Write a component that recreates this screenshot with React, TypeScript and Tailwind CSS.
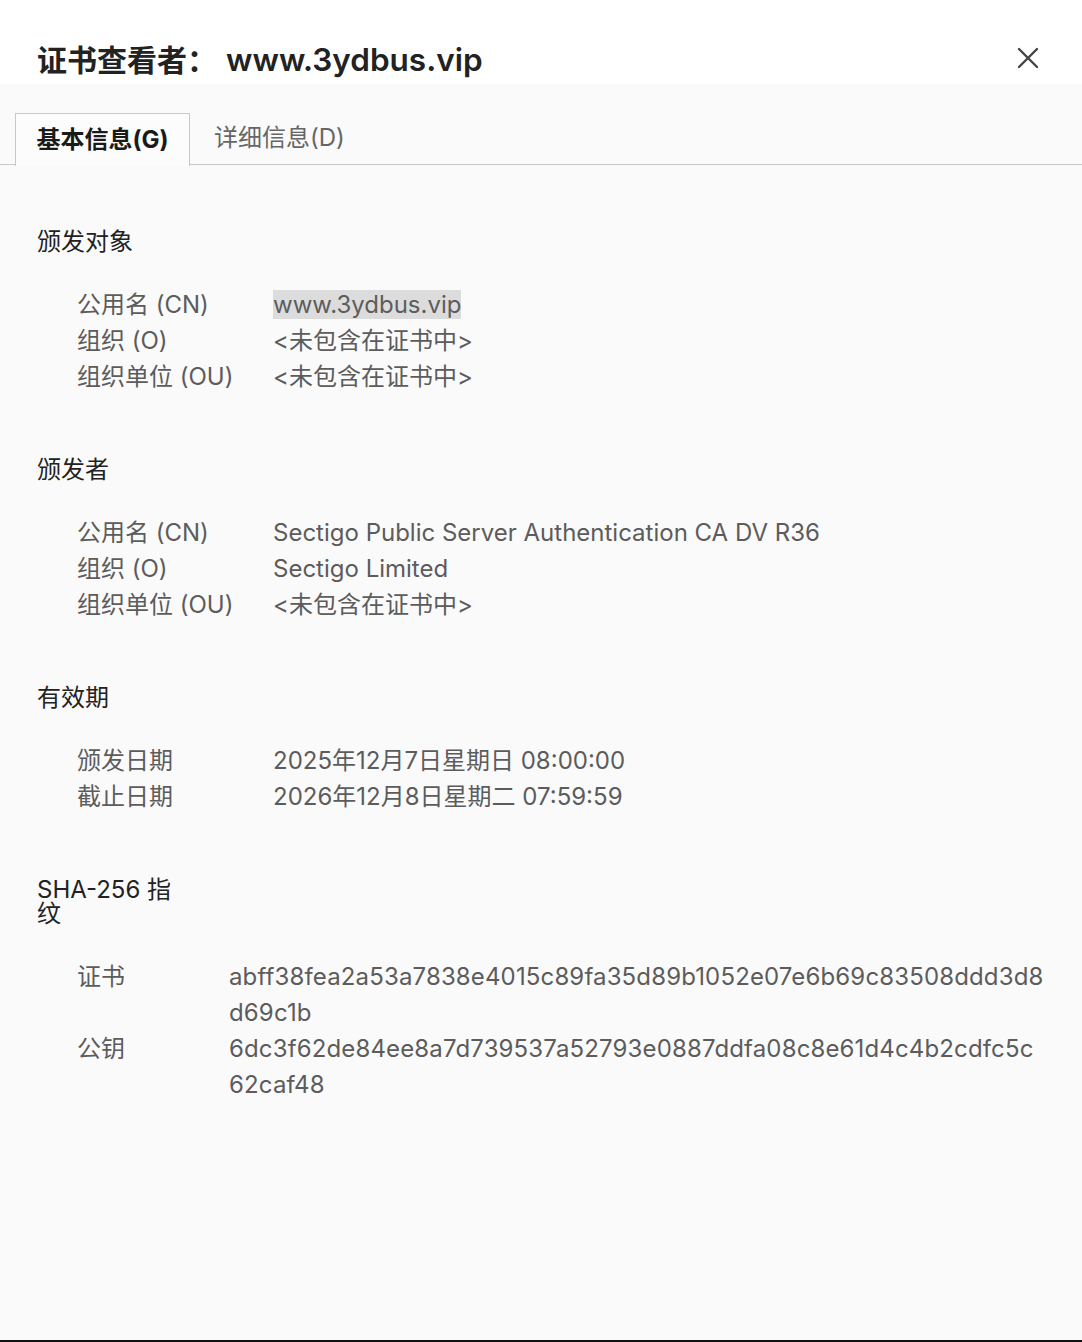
import React from "react";

type Row = { label: string; value: string[]; highlight?: boolean };
type Section = { title: string; labelWidth: string; mono?: boolean; rows: Row[] };

const NOT_INCLUDED = "<未包含在证书中>";

const sections: Section[] = [
  {
    title: "颁发对象",
    labelWidth: "w-[196px]",
    rows: [
      { label: "公用名 (CN)", value: ["www.3ydbus.vip"], highlight: true },
      { label: "组织 (O)", value: [NOT_INCLUDED] },
      { label: "组织单位 (OU)", value: [NOT_INCLUDED] },
    ],
  },
  {
    title: "颁发者",
    labelWidth: "w-[196px]",
    rows: [
      { label: "公用名 (CN)", value: ["Sectigo Public Server Authentication CA DV R36"] },
      { label: "组织 (O)", value: ["Sectigo Limited"] },
      { label: "组织单位 (OU)", value: [NOT_INCLUDED] },
    ],
  },
  {
    title: "有效期",
    labelWidth: "w-[196px]",
    rows: [
      { label: "颁发日期", value: ["2025年12月7日星期日 08:00:00"] },
      { label: "截止日期", value: ["2026年12月8日星期二 07:59:59"] },
    ],
  },
  {
    title: "SHA-256 指纹",
    labelWidth: "w-[152px]",
    mono: true,
    rows: [
      {
        label: "证书",
        value: ["abff38fea2a53a7838e4015c89fa35d89b1052e07e6b69c83508ddd3d8", "d69c1b"],
      },
      {
        label: "公钥",
        value: ["6dc3f62de84ee8a7d739537a52793e0887ddfa08c8e61d4c4b2cdfc5c", "62caf48"],
      },
    ],
  },
];

const CloseIcon = () => (
  <svg width="24" height="24" viewBox="0 0 24 24" fill="none" stroke="#444" strokeWidth="2.4" strokeLinecap="round">
    <path d="M3 3 L21 21 M21 3 L3 21" />
  </svg>
);

export default function App() {
  return (
    <div
      className="flex h-[1342px] w-full flex-col bg-[#fafafa] border-b-2 border-[#111]"
      style={{ fontFamily: 'Inter, "Noto Sans CJK SC", sans-serif' }}
    >
      {/* title bar */}
      <div className="flex h-[84px] items-start justify-between bg-white pl-[37px] pr-[42px] pt-[40px]">
        <h1 className="text-[30px] font-semibold leading-[40px] text-[#222]">
          证书查看者：<span className="ml-[9px] text-[31.5px]">www.3ydbus.vip</span>
        </h1>
        <button className="mt-[6px] text-[#444]">
          <CloseIcon />
        </button>
      </div>

      {/* tabs */}
      <div className="flex items-end border-b-[1.5px] border-[#c8c8c8] pl-[15px] pt-[28px]">
        <div className="-mb-[1.5px] flex h-[53px] w-[175px] items-center justify-center border-[1.5px] border-b-0 border-[#c8c8c8] bg-[#fcfcfc] text-[24px] font-bold text-[#1a1a1a]">
          基本信息(G)
        </div>
        <div className="flex h-[52px] items-center pl-[24px] text-[24px] text-[#666]">详细信息(D)</div>
      </div>

      {/* body */}
      <div className="flex flex-col gap-[63px] pl-[37px] pt-[65px]">
        {sections.map((s) => (
          <div key={s.title} className="flex flex-col gap-[33px]">
            <div className="max-w-[146px] text-[24px] leading-[24px] text-[#222]">{s.title}</div>
            <div className="flex flex-col pl-[40px]">
              {s.rows.map((r) => (
                <div key={r.label} className="flex text-[24px] leading-[36px] text-[#5c5c5c]">
                  <div className={`${s.labelWidth} shrink-0`}>{r.label}</div>
                  <div className={s.mono ? "flex flex-col tracking-[0.14px]" : "flex flex-col"}>
                    {r.value.map((v) => (
                      <span key={v}>
                        <span className={r.highlight ? "bg-[#dcdcdc]" : ""}>{v}</span>
                      </span>
                    ))}
                  </div>
                </div>
              ))}
            </div>
          </div>
        ))}
      </div>
    </div>
  );
}
